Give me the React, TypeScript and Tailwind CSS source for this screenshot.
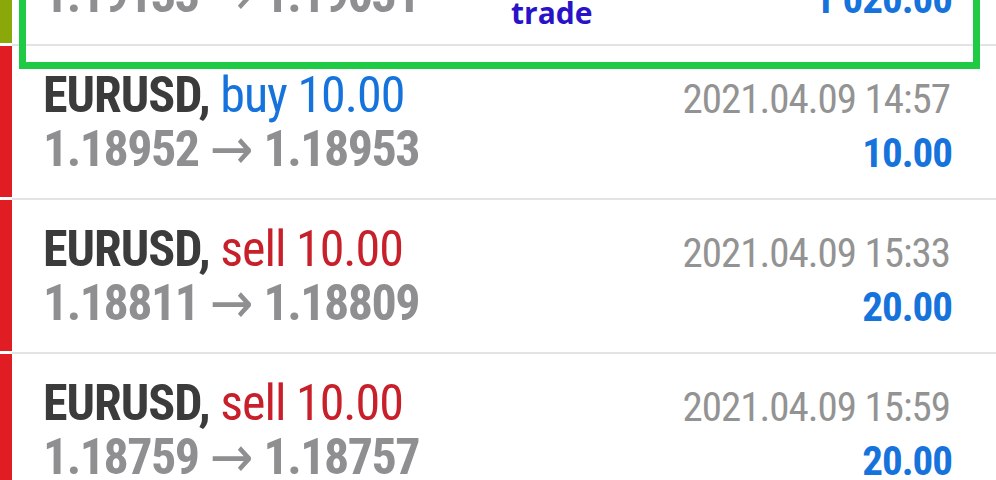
import React from "react";

type Row = {
  bar: string;
  side: "buy" | "sell";
  open: string;
  close: string;
  date: string;
  profit: string;
};

const rows: Row[] = [
  { bar: "bg-[#8aa80a]", side: "buy", open: "1.19133", close: "1.19031", date: "2021.04.09 14:12", profit: "1 020.00" },
  { bar: "bg-[#e11d24]", side: "buy", open: "1.18952", close: "1.18953", date: "2021.04.09 14:57", profit: "10.00" },
  { bar: "bg-[#e11d24]", side: "sell", open: "1.18811", close: "1.18809", date: "2021.04.09 15:33", profit: "20.00" },
  { bar: "bg-[#e11d24]", side: "sell", open: "1.18759", close: "1.18757", date: "2021.04.09 15:59", profit: "20.00" },
];

const cond = { fontFamily: '"Roboto Condensed", Roboto, sans-serif', fontStretch: "condensed" } as React.CSSProperties;

function TradeRow({ r }: { r: Row }) {
  return (
    <div className="flex items-stretch">
      <div className={`w-[12px] mb-[3px] shrink-0 ${r.bar}`} />
      <div className="flex-1 flex justify-between border-b-2 border-[#e3e3e3] pl-[31px] pr-[44px] pt-[22px] pb-[22px]" style={cond}>
        <div className="flex flex-col">
          <div className="h-[54px] text-[50px] leading-[54px] tracking-[-1px] whitespace-nowrap">
            <span className="font-bold text-[#3b3b3b]">EURUSD,</span>{" "}
            <span className={r.side === "buy" ? "text-[#1673dc]" : "text-[#c8202a]"}>
              {r.side} 10.00
            </span>
          </div>
          <div className="h-[54px] flex items-center text-[50px] leading-[54px] font-bold text-[#8f8f92] tracking-[-1.5px] whitespace-nowrap">
            <span>{r.open}</span>
            <span
              className="font-normal text-[58px] leading-[54px] tracking-normal ml-[11px] mr-[10px]"
              style={{ fontFamily: '"DejaVu Sans", sans-serif' }}
            >
              →
            </span>
            <span>{r.close}</span>
          </div>
        </div>
        <div className="flex flex-col items-end">
          <div className="h-[54px] flex items-end">
            <span className="text-[41px] leading-[44px] tracking-[-1px] text-[#939393] whitespace-nowrap pb-[1px] mr-[2px]">{r.date}</span>
          </div>
          <div className="h-[54px] flex items-end">
            <span className="text-[41px] leading-[44px] tracking-[-1px] font-bold text-[#1673dc] whitespace-nowrap pb-[1px]">{r.profit}</span>
          </div>
        </div>
      </div>
    </div>
  );
}

export default function App() {
  return (
    <div className="relative w-[996px] h-[480px] overflow-hidden bg-white">
      <div className="flex flex-col mt-[-108px]">
        {rows.map((r, i) => (
          <TradeRow key={i} r={r} />
        ))}
      </div>
      <div className="absolute left-[19px] top-[-130px] w-[961px] h-[199px] border-[7px] border-[#1fcb45]" />
      <div
        className="absolute left-[511px] top-[-2px] text-[30px] leading-[30px] font-bold text-[#2a12c8]"
        style={{ fontFamily: '"Open Sans", sans-serif' }}
      >
        trade
      </div>
    </div>
  );
}
